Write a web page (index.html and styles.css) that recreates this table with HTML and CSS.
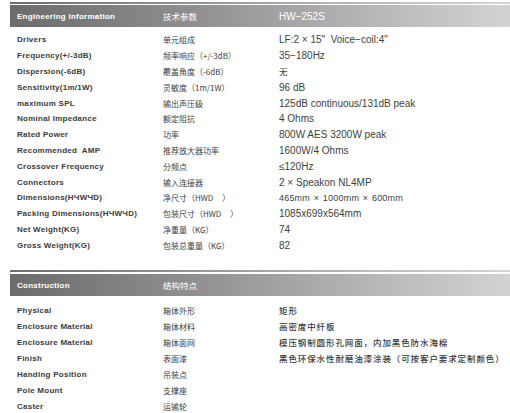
FILE: index.html
```html
<!DOCTYPE html>
<html>
<head>
<meta charset="utf-8">
<link rel="stylesheet" href="styles.css">
</head>
<body>
<div class="page">
  <section class="sec sec1">
    <div class="rule"></div>
    <div class="band">
      <span class="c1">Engineering Information</span>
      <span class="c2">技术参数</span>
      <span class="c3">HW−252S</span>
    </div>
    <div class="rows">
      <div class="row"><span class="c1">Drivers</span><span class="c2">单元组成</span><span class="c3">LF:2 × 15"&nbsp; Voice−coil:4"</span></div>
      <div class="row"><span class="c1">Frequency(+/-3dB)</span><span class="c2">频率响应（+/-3dB）</span><span class="c3">35−180Hz</span></div>
      <div class="row"><span class="c1">Dispersion(-6dB)</span><span class="c2">覆盖角度（-6dB）</span><span class="c3 cn">无</span></div>
      <div class="row"><span class="c1">Sensitivity(1m/1W)</span><span class="c2">灵敏度（1m/1W）</span><span class="c3">96 dB</span></div>
      <div class="row"><span class="c1">maximum SPL</span><span class="c2">输出声压级</span><span class="c3">125dB continuous/131dB peak</span></div>
      <div class="row"><span class="c1">Nominal Impedance</span><span class="c2">额定阻抗</span><span class="c3">4 Ohms</span></div>
      <div class="row"><span class="c1">Rated Power</span><span class="c2">功率</span><span class="c3">800W AES 3200W peak</span></div>
      <div class="row"><span class="c1">Recommended&nbsp; AMP</span><span class="c2">推荐放大器功率</span><span class="c3">1600W/4 Ohms</span></div>
      <div class="row"><span class="c1">Crossover Frequency</span><span class="c2">分频点</span><span class="c3">≤120Hz</span></div>
      <div class="row"><span class="c1">Connectors</span><span class="c2">输入连接器</span><span class="c3">2 × Speakon NL4MP</span></div>
      <div class="row"><span class="c1">Dimensions(HЧWЧD)</span><span class="c2">净尺寸（HWD&nbsp;&nbsp;&nbsp;&nbsp;&nbsp;）</span><span class="c3 small">465mm × 1000mm × 600mm</span></div>
      <div class="row"><span class="c1">Packing Dimensions(HЧWЧD)</span><span class="c2">包装尺寸（HWD&nbsp;&nbsp;&nbsp;&nbsp;&nbsp;）</span><span class="c3">1085x699x564mm</span></div>
      <div class="row"><span class="c1">Net Weight(KG)</span><span class="c2">净重量（KG）</span><span class="c3">74</span></div>
      <div class="row"><span class="c1">Gross Weight(KG)</span><span class="c2">包装总重量（KG）</span><span class="c3">82</span></div>
    </div>
  </section>
  <section class="sec sec2">
    <div class="rule"></div>
    <div class="band">
      <span class="c1">Construction</span>
      <span class="c2">结构特点</span>
      <span class="c3"></span>
    </div>
    <div class="rows rows2">
      <div class="row"><span class="c1">Physical</span><span class="c2">箱体外形</span><span class="c3 cnv">矩形</span></div>
      <div class="row"><span class="c1">Enclosure Material</span><span class="c2">箱体材料</span><span class="c3 cnv">高密度中纤板</span></div>
      <div class="row"><span class="c1">Enclosure Material</span><span class="c2">箱体面网</span><span class="c3 cnv">模压钢制圆形孔网面，内加黑色防水海棉</span></div>
      <div class="row"><span class="c1">Finish</span><span class="c2">表面漆</span><span class="c3 cnv">黑色环保水性耐磨油漆涂装（可按客户要求定制颜色）</span></div>
      <div class="row"><span class="c1">Handing Position</span><span class="c2">吊装点</span><span class="c3"></span></div>
      <div class="row"><span class="c1">Pole Mount</span><span class="c2">支撑座</span><span class="c3"></span></div>
      <div class="row"><span class="c1">Caster</span><span class="c2">运输轮</span><span class="c3"></span></div>
    </div>
  </section>
</div>
</body>
</html>
```

FILE: styles.css
```css
html, body {
  margin: 0;
  padding: 0;
  background: #ffffff;
}

.page {
  width: 510px;
  height: 413px;
  overflow: hidden;
  padding-left: 10px;
  box-sizing: border-box;
  font-family: "Liberation Sans", Arial, sans-serif;
}

.sec1 {
  padding-top: 2px;
}

.sec2 {
  padding-top: 17px;
}

.rule {
  height: 2px;
  background: linear-gradient(to right, #6d6d6e, #b9b9bb 70%, #d4d4d6);
}

.sec1 .rule {
  margin-bottom: 1px;
}

.sec2 .rule {
  margin-bottom: 2px;
}

.band {
  height: 22px;
  display: grid;
  grid-template-columns: 146px 116px 1fr;
  align-items: center;
  padding-left: 7px;
  background: linear-gradient(to right, #6b6b6c 0%, #8e8e90 35%, #b4b4b7 70%, #d3d3d5 100%);
  color: #ffffff;
}

.band .c1 {
  font-weight: bold;
  font-size: 8px;
  letter-spacing: 0.25px;
}

.band .c2 {
  font-family: "Noto Sans CJK SC", sans-serif;
  font-size: 8.5px;
}

.band .c3 {
  font-size: 10px;
}

.rows {
  margin-top: 5px;
}

.rows2 {
  margin-top: 6px;
}

.row {
  height: 15.8px;
  display: grid;
  grid-template-columns: 146px 116px 1fr;
  align-items: center;
  padding-left: 7px;
  white-space: nowrap;
}

.rows2 .row {
  height: 16px;
}

.row .c1 {
  font-weight: bold;
  font-size: 8px;
  letter-spacing: 0.25px;
  color: #3b3b3c;
}

.row .c2 {
  font-family: "Noto Sans CJK SC", sans-serif;
  font-size: 8px;
  color: #3e3e40;
}

.row .c3 {
  font-size: 10px;
  color: #3e3e40;
}

.row .c3.cn {
  font-family: "Noto Sans CJK SC", sans-serif;
  font-size: 8.5px;
}

.row .c3.small {
  font-size: 9px;
  letter-spacing: 0.2px;
  word-spacing: 1px;
}

.row .c3.cnv {
  font-family: "Noto Sans CJK SC", sans-serif;
  font-size: 8.5px;
  letter-spacing: 0.9px;
  font-weight: 500;
  color: #38383a;
}
```
